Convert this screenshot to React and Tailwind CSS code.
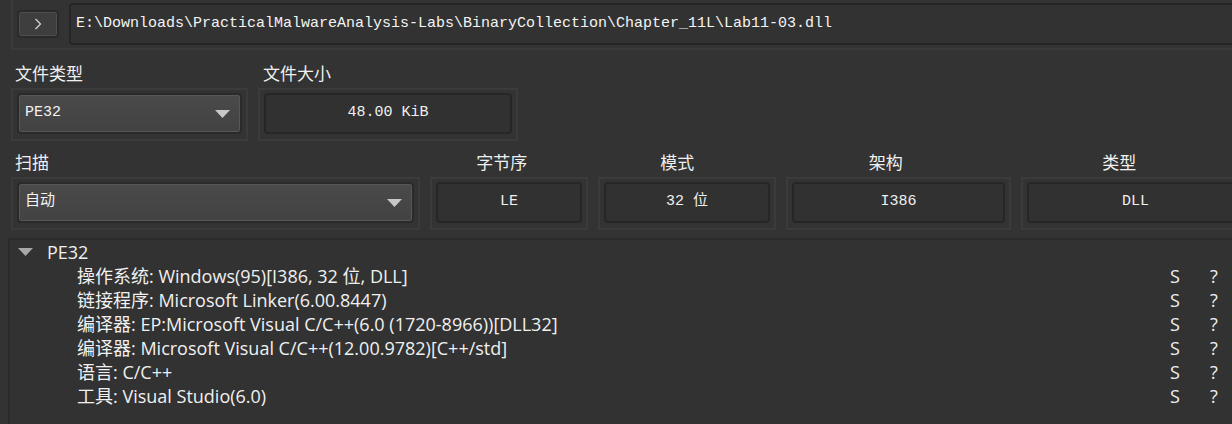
const mono = "font-['Liberation_Mono','Noto_Sans_CJK_SC',monospace]";
const cjk = "font-['Noto_Sans_CJK_SC',sans-serif]";
const ui = "font-['Open_Sans','Noto_Sans_CJK_SC',sans-serif]";

function Arrow() {
  return (
    <svg width="15" height="8" viewBox="0 0 15 8" className="shrink-0">
      <path d="M0 0 H15 L7.5 8 Z" fill="#c8c8c8" />
    </svg>
  );
}

function Frame({ className = '', children }) {
  return (
    <div className={`h-[53px] border-2 border-[#3b3b3b] px-[4px] pt-[3px] pb-[4px] ${className}`}>
      {children}
    </div>
  );
}

function Field({ children }) {
  return (
    <div className={`h-[41px] rounded-[4px] border-2 border-[#262626] bg-[#313131] flex items-center justify-center text-[15px] text-[#f0f0f0] ${mono}`}>
      {children}
    </div>
  );
}

function Combo({ value }) {
  return (
    <div className={`h-[41px] rounded-[4px] border-2 border-[#2a2a2a] bg-gradient-to-b from-[#4a4a4a] to-[#424242] shadow-[inset_0_0_0_1px_#575757] flex items-center pl-[6px] pr-[10px] text-[15px] text-[#f4f4f4] ${mono}`}>
      <span className="flex-1">{value}</span>
      <Arrow />
    </div>
  );
}

const rows = [
  '操作系统: Windows(95)[I386, 32 位, DLL]',
  '链接程序: Microsoft Linker(6.00.8447)',
  '编译器: EP:Microsoft Visual C/C++(6.0 (1720-8966))[DLL32]',
  '编译器: Microsoft Visual C/C++(12.00.9782)[C++/std]',
  '语言: C/C++',
  '工具: Visual Studio(6.0)',
];

export default function App() {
  return (
    <div className="w-[1232px] h-[424px] overflow-hidden bg-[#333333] text-[#f0f0f0]">
      {/* path bar */}
      <div className="ml-[11px] w-[1240px] h-[50px] border-l-2 border-b-2 border-[#3b3b3b] flex items-start">
        <button className="mt-[10px] ml-[4px] w-[42px] h-[28px] rounded-[4px] border-2 border-[#2a2a2a] bg-[#3e3e3e] shadow-[inset_0_0_0_1px_#4e4e4e] flex items-center justify-center">
          <svg width="8" height="12" viewBox="0 0 8 12">
            <path d="M1.5 1 L6.5 6 L1.5 11" fill="none" stroke="#d8d8d8" strokeWidth="1.2" />
          </svg>
        </button>
        <div className={`mt-[3px] ml-[10px] flex-1 h-[42px] rounded-[4px] border-2 border-[#262626] bg-[#323232] flex items-center pl-[5px] text-[15px] text-[#f4f4f4] ${mono}`}>
          E:\Downloads\PracticalMalwareAnalysis-Labs\BinaryCollection\Chapter_11L\Lab11-03.dll
        </div>
      </div>

      {/* file type / size */}
      <div className={`mt-[12px] h-[22px] flex items-center text-[17px] ${cjk}`}>
        <span className="ml-[15px] w-[248px]">文件类型</span>
        <span>文件大小</span>
      </div>
      <div className="mt-[4px] ml-[11px] flex gap-[10px]">
        <Frame className="w-[237px]">
          <Combo value="PE32" />
        </Frame>
        <Frame className="w-[260px]">
          <Field>48.00 KiB</Field>
        </Frame>
      </div>

      {/* scan / endianness / mode / arch / type */}
      <div className={`mt-[10px] h-[22px] ml-[11px] flex gap-[10px] items-center text-[17px] ${cjk}`}>
        <span className="w-[409px] pl-[4px]">扫描</span>
        <span className="w-[158px] text-center">字节序</span>
        <span className="w-[178px] text-center">模式</span>
        <span className="w-[225px] text-center">架构</span>
        <span className="w-[229px] text-center">类型</span>
      </div>
      <div className="mt-[4px] ml-[11px] flex gap-[10px]">
        <Frame className="w-[409px] shrink-0">
          <Combo value="自动" />
        </Frame>
        <Frame className="w-[158px] shrink-0">
          <Field>LE</Field>
        </Frame>
        <Frame className="w-[178px] shrink-0">
          <Field>32 位</Field>
        </Frame>
        <Frame className="w-[225px] shrink-0">
          <Field>I386</Field>
        </Frame>
        <Frame className="w-[229px] shrink-0">
          <Field>DLL</Field>
        </Frame>
      </div>

      {/* result tree */}
      <div className={`mt-[8px] ml-[8px] h-[200px] border-t-2 border-l-2 border-[#2a2a2a] bg-[#323232] text-[18px] leading-[24px] ${ui}`}>
        <div className="h-[24px] flex items-center">
          <svg width="15" height="8" viewBox="0 0 15 8" className="ml-[8px]">
            <path d="M0 0 H15 L7.5 8 Z" fill="#a8a8a8" />
          </svg>
          <span className="ml-[14px]">PE32</span>
        </div>
        {rows.map((r) => (
          <div key={r} className="h-[24px] flex items-center">
            <span className="ml-[67px] flex-1 whitespace-nowrap">{r}</span>
            <span className="w-[40px]">S</span>
            <span className="w-[22px]">?</span>
          </div>
        ))}
      </div>
    </div>
  );
}
